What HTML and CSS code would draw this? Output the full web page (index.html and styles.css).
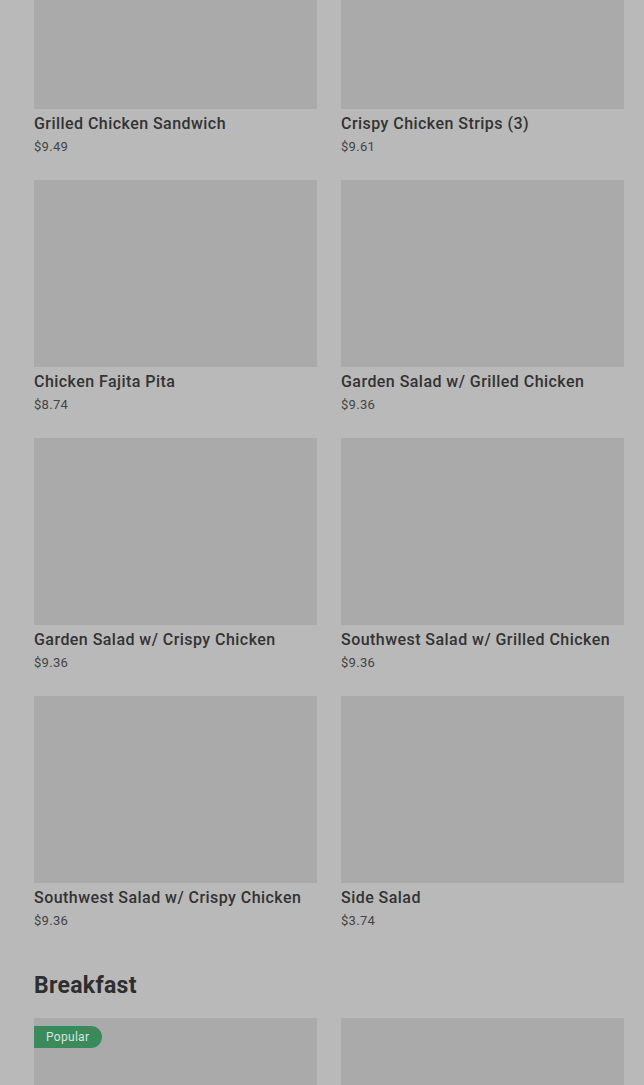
FILE: index.html
```html
<!DOCTYPE html>
<html>
<head>
  <title>Menu</title>
  <link rel="stylesheet" href="styles.css">
</head>
<body>
  <div class="menu">
    <div class="section first">
      <div class="grid">
        <div class="card">
          <div class="photo"></div>
          <div class="name">Grilled Chicken Sandwich</div>
          <div class="price">$9.49</div>
        </div>
        <div class="card">
          <div class="photo"></div>
          <div class="name">Crispy Chicken Strips (3)</div>
          <div class="price">$9.61</div>
        </div>
        <div class="card">
          <div class="photo"></div>
          <div class="name">Chicken Fajita Pita</div>
          <div class="price">$8.74</div>
        </div>
        <div class="card">
          <div class="photo"></div>
          <div class="name">Garden Salad w/ Grilled Chicken</div>
          <div class="price">$9.36</div>
        </div>
        <div class="card">
          <div class="photo"></div>
          <div class="name">Garden Salad w/ Crispy Chicken</div>
          <div class="price">$9.36</div>
        </div>
        <div class="card">
          <div class="photo"></div>
          <div class="name">Southwest Salad w/ Grilled Chicken</div>
          <div class="price">$9.36</div>
        </div>
        <div class="card">
          <div class="photo"></div>
          <div class="name">Southwest Salad w/ Crispy Chicken</div>
          <div class="price">$9.36</div>
        </div>
        <div class="card">
          <div class="photo"></div>
          <div class="name">Side Salad</div>
          <div class="price">$3.74</div>
        </div>
      </div>
    </div>

    <div class="section">
      <h2>Breakfast</h2>
      <div class="grid">
        <div class="card">
          <div class="photo">
            <span class="badge">Popular</span>
          </div>
        </div>
        <div class="card">
          <div class="photo"></div>
        </div>
      </div>
    </div>
  </div>
</body>
</html>
```

FILE: styles.css
```css
body {
  margin: 0;
  padding: 0;
  background-color: #b9b9b9;
  font-family: Roboto, "Liberation Sans", sans-serif;
  overflow: hidden;
}

.menu {
  padding: 0 20px 0 34px;
}

.section {
  margin-top: 43px;
}

.section.first {
  margin-top: -78px;
}

h2 {
  margin: 0 0 18px 0;
  font-size: 23px;
  line-height: 28px;
  font-weight: 700;
  letter-spacing: 0.3px;
  color: #2e2e2e;
}

.grid {
  display: grid;
  grid-template-columns: 1fr 1fr;
  column-gap: 24px;
  row-gap: 25px;
}

.photo {
  position: relative;
  height: 187px;
  background-color: #aaaaaa;
}

.name {
  margin-top: 5px;
  font-size: 16px;
  line-height: 20px;
  font-weight: 500;
  letter-spacing: 0.45px;
  color: #333333;
}

.price {
  margin-top: 5px;
  font-size: 13px;
  line-height: 16px;
  letter-spacing: 0.3px;
  color: #444444;
}

.badge {
  position: absolute;
  top: 8px;
  left: 0;
  height: 22px;
  padding: 0 13px 0 12px;
  line-height: 22px;
  font-size: 12px;
  letter-spacing: 0.3px;
  color: #d6e6dc;
  background-color: #3b8a5c;
  border-radius: 0 11px 11px 0;
}
```
